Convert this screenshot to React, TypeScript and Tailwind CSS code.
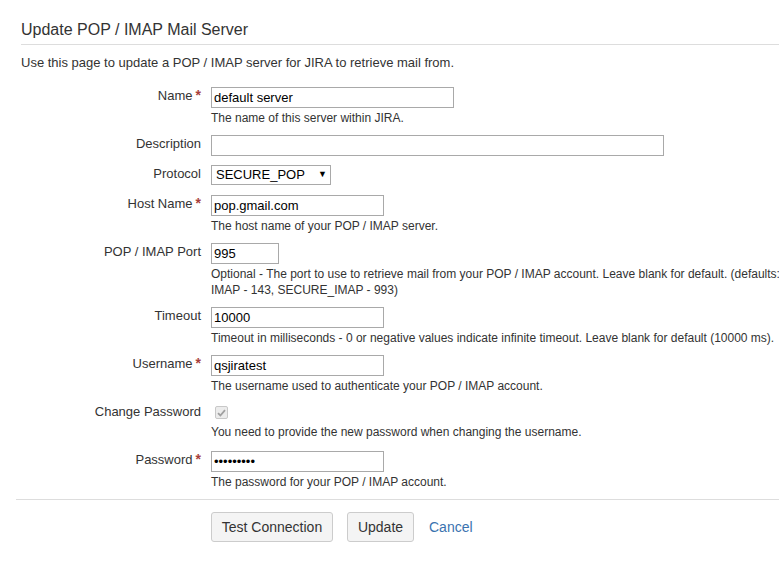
import React from "react";

interface Field {
  label: string;
  required?: boolean;
  value?: string;
  width: string;
  hint?: string[];
  type?: string;
}

const Label = ({ text, required }: { text: string; required?: boolean }) => (
  <div className="w-[201px] shrink-0 text-right leading-[17px] text-[#333]">
    {text}
    {required && <span className="ml-[3px] text-[14px] font-bold text-[#a8403b]">*</span>}
  </div>
);

const Hint = ({ lines }: { lines: string[] }) => (
  <div className="mt-[2px] text-[12px] text-[#333] leading-4 whitespace-nowrap">
    {lines.map((l, i) => (
      <div key={i}>{l}</div>
    ))}
  </div>
);

const TextRow = ({ f }: { f: Field }) => (
  <div className="flex gap-[10px] pb-[9px]">
    <Label text={f.label} required={f.required} />
    <div className="flex flex-col">
      <input
        type={f.type || "text"}
        defaultValue={f.value}
        readOnly
        className={`${f.width} h-[21px] border border-[#a9a9a9] bg-white px-[2px] text-[13px] text-black outline-none`}
      />
      {f.hint && <Hint lines={f.hint} />}
    </div>
  </div>
);

const App = () => {
  const name: Field = {
    label: "Name",
    required: true,
    value: "default server",
    width: "w-[243px]",
    hint: ["The name of this server within JIRA."],
  };
  const desc: Field = { label: "Description", value: "", width: "w-[453px]" };
  const host: Field = {
    label: "Host Name",
    required: true,
    value: "pop.gmail.com",
    width: "w-[173px]",
    hint: ["The host name of your POP / IMAP server."],
  };
  const port: Field = {
    label: "POP / IMAP Port",
    value: "995",
    width: "w-[68px]",
    hint: [
      "Optional - The port to use to retrieve mail from your POP / IMAP account. Leave blank for default. (defaults: POP - 110, SECURE_POP - 995,",
      "IMAP - 143, SECURE_IMAP - 993)",
    ],
  };
  const timeout: Field = {
    label: "Timeout",
    value: "10000",
    width: "w-[173px]",
    hint: [
      "Timeout in milliseconds - 0 or negative values indicate infinite timeout. Leave blank for default (10000 ms).",
    ],
  };
  const user: Field = {
    label: "Username",
    required: true,
    value: "qsjiratest",
    width: "w-[173px]",
    hint: ["The username used to authenticate your POP / IMAP account."],
  };
  const pass: Field = {
    label: "Password",
    required: true,
    value: "qsjiratst",
    type: "password",
    width: "w-[173px]",
    hint: ["The password for your POP / IMAP account."],
  };

  return (
    <div className="w-[779px] h-[562px] overflow-hidden bg-white text-[13px] text-[#333] font-['Liberation_Sans',Arial,sans-serif]">
      <div className="ml-[21px] pt-[20px] pb-[4px] border-b border-[#dddddd] text-[16px] leading-5 whitespace-nowrap">
        Update POP / IMAP Mail Server
      </div>
      <div className="ml-[21px] mt-[8px] leading-5">
        Use this page to update a POP / IMAP server for JIRA to retrieve mail from.
      </div>

      <div className="mt-[14px]">
        <TextRow f={name} />
        <TextRow f={desc} />

        <div className="flex gap-[10px] pb-[10px]">
          <Label text="Protocol" />
          <div className="w-[120px] h-[20px] border border-[#a9a9a9] bg-white flex items-center justify-between pl-[4px] pr-[3px] text-black">
            <span>SECURE_POP</span>
            <span className="text-[9px]">▼</span>
          </div>
        </div>

        <TextRow f={host} />
        <TextRow f={port} />
        <TextRow f={timeout} />
        <TextRow f={user} />

        <div className="flex gap-[10px] pb-[11px]">
          <Label text="Change Password" />
          <div className="flex flex-col">
            <div className="h-[21px] pt-[3px] pl-[4px]">
              <div className="w-[13px] h-[13px] rounded-[2px] border border-[#c8c8c8] bg-[#ececec] flex items-center justify-center">
                <svg width="9" height="8" viewBox="0 0 9 8">
                  <path d="M1 4.2 L3.4 6.5 L8 1.2" fill="none" stroke="#a0a0a0" strokeWidth="1.8" />
                </svg>
              </div>
            </div>
            <div className="text-[12px] leading-4 whitespace-nowrap">
              You need to provide the new password when changing the username.
            </div>
          </div>
        </div>

        <TextRow f={pass} />
      </div>

      <div className="ml-[16px] border-t border-[#dddddd]" />

      <div className="mt-[12px] ml-[211px] flex items-center text-[14px]">
        <button className="h-[30px] w-[122px] whitespace-nowrap rounded-[3px] border border-[#cccccc] bg-[#f4f4f4] text-[#333]">
          Test Connection
        </button>
        <button className="ml-[14px] h-[30px] w-[67px] rounded-[3px] border border-[#cccccc] bg-[#f4f4f4] text-[#333]">
          Update
        </button>
        <span className="ml-[15px] text-[#3b73af]">Cancel</span>
      </div>
    </div>
  );
};

export default App;
